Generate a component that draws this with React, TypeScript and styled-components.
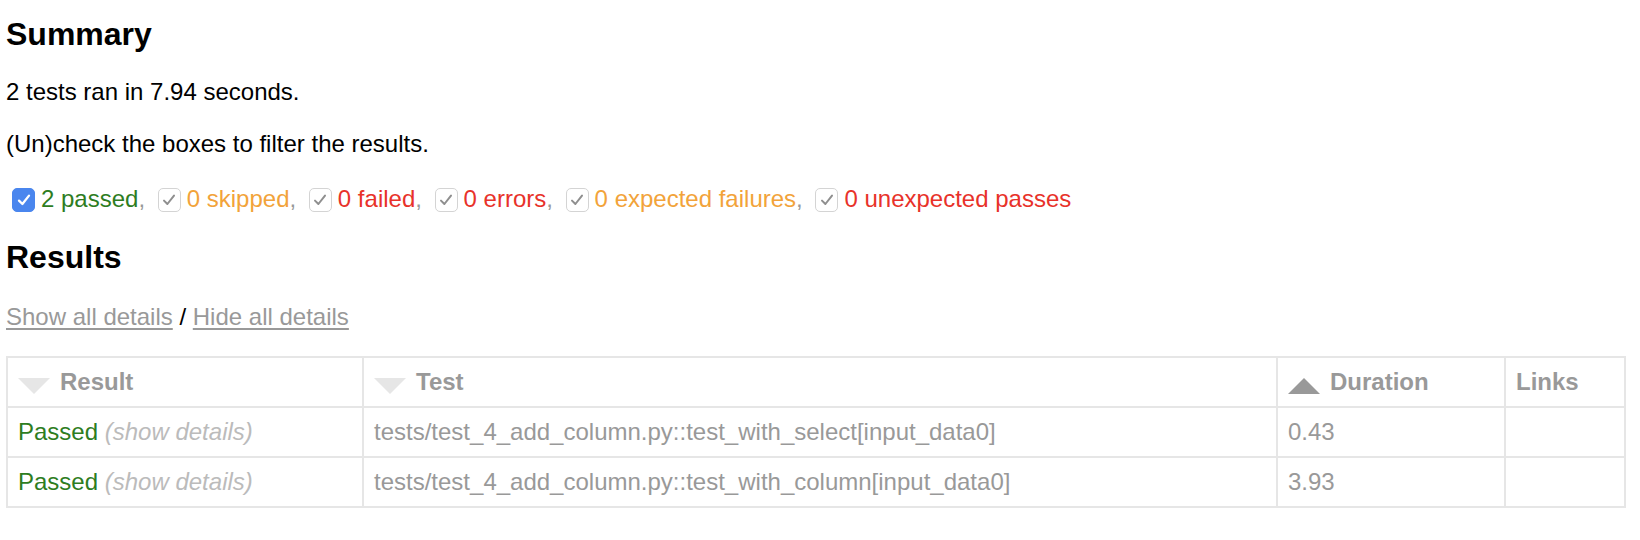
import React from "react"
import styled, { createGlobalStyle } from "styled-components"

const GlobalStyle = createGlobalStyle`
	body {
		margin: 0;
		background: #fff;
		font-family: "Liberation Sans", Helvetica, Arial, sans-serif;
		font-size: 24px;
		color: #999;
	}
`

const Page = styled.div`
	padding: 16px 14px 0 6px;
`

const Heading = styled.h2<{ $after: number }>`
	font-size: 32px;
	line-height: 36px;
	font-weight: bold;
	color: #000;
	margin: 0 0 ${p => p.$after}px 0;
`

const Para = styled.p<{ $after: number }>`
	margin: 0 0 ${p => p.$after}px 0;
	line-height: 28px;
	color: #000;
`

const Filters = styled.p`
	margin: 0 0 26px 0;
	line-height: 28px;
	color: #999;
	white-space: nowrap;
`

const Box = styled.span<{ $on?: boolean }>`
	display: inline-block;
	box-sizing: border-box;
	width: 23px;
	height: 24px;
	margin: 0 6px 0 6px;
	vertical-align: -5px;
	border-radius: 5px;
	background: ${p => (p.$on ? "#4a86ee" : "#fff")};
	border: 1px solid ${p => (p.$on ? "#4a86ee" : "#d4d4d4")};

	svg {
		display: block;
		margin: 3px auto 0;
	}
`

const Outcome = styled.span<{ color: string }>`
	color: ${p => p.color};
`

const Link = styled.a`
	color: #999;
	text-decoration: underline;
	text-underline-offset: 3px;
`

const Slash = styled.span`
	color: #000;
`

const Table = styled.table`
	width: 1620px;
	border-collapse: collapse;
	table-layout: fixed;
	border: 2px solid #e6e6e6;
	color: #999;
	font-size: 24px;
`

const Col = styled.col<{ $w?: number }>`
	${p => (p.$w ? `width: ${p.$w}px;` : "")}
`

const Th = styled.th`
	padding: 10px;
	border: 2px solid #e6e6e6;
	text-align: left;
	font-weight: bold;
	line-height: 28px;
`

const Td = styled.td`
	padding: 10px;
	border: 2px solid #e6e6e6;
	text-align: left;
	line-height: 28px;
	white-space: nowrap;
`

const SortIcon = styled.span<{ $asc?: boolean }>`
	float: left;
	width: 0;
	height: 0;
	margin: 10px 10px 0 0;
	border-left: 16px solid transparent;
	border-right: 16px solid transparent;
	${p => (p.$asc ? "border-bottom: 16px solid #999;" : "border-top: 16px solid #e6e6e6;")}
`

const Details = styled.span`
	color: #bbb;
	font-style: italic;
`

const Check = ({ on }: { on?: boolean }) => (
	<Box $on={on}>
		<svg width="16" height="16" viewBox="0 0 16 16">
			<path
				d="M3 8.6 L6.4 12 L13 3.6"
				fill="none"
				stroke={on ? "#fff" : "#8f8f8f"}
				strokeWidth={on ? 2.3 : 2}
				strokeLinecap="round"
				strokeLinejoin="round"
			/>
		</svg>
	</Box>
)

const filters = [
	{ on: true, label: "2 passed", color: "#2e7d1f" },
	{ on: false, label: "0 skipped", color: "#f2a33a" },
	{ on: false, label: "0 failed", color: "#e8322a" },
	{ on: false, label: "0 errors", color: "#e8322a" },
	{ on: false, label: "0 expected failures", color: "#f2a33a" },
	{ on: false, label: "0 unexpected passes", color: "#e8322a" },
]

const results = [
	{ test: "tests/test_4_add_column.py::test_with_select[input_data0]", duration: "0.43" },
	{ test: "tests/test_4_add_column.py::test_with_column[input_data0]", duration: "3.93" },
]

export default function App() {
	return (
		<Page>
			<GlobalStyle />
			<Heading $after={26}>Summary</Heading>
			<Para $after={24}>2 tests ran in 7.94 seconds.</Para>
			<Para $after={27}>(Un)check the boxes to filter the results.</Para>
			<Filters>
				{filters.map((f, i) => (
					<React.Fragment key={f.label}>
						<Check on={f.on} />
						<Outcome color={f.color}>{f.label}</Outcome>
						{i < filters.length - 1 ? ", " : ""}
					</React.Fragment>
				))}
			</Filters>
			<Heading $after={28}>Results</Heading>
			<Para $after={25}>
				<Link href="#">Show all details</Link>
				<Slash> / </Slash>
				<Link href="#">Hide all details</Link>
			</Para>
			<Table>
				<colgroup>
					<Col $w={356} />
					<Col $w={914} />
					<Col $w={228} />
					<Col />
				</colgroup>
				<thead>
					<tr>
						<Th>
							<SortIcon />
							Result
						</Th>
						<Th>
							<SortIcon />
							Test
						</Th>
						<Th>
							<SortIcon $asc />
							Duration
						</Th>
						<Th>Links</Th>
					</tr>
				</thead>
				<tbody>
					{results.map(r => (
						<tr key={r.test}>
							<Td>
								<Outcome color="#2e7d1f">Passed</Outcome>
								<Details> (show details)</Details>
							</Td>
							<Td>{r.test}</Td>
							<Td>{r.duration}</Td>
							<Td />
						</tr>
					))}
				</tbody>
			</Table>
		</Page>
	)
}
